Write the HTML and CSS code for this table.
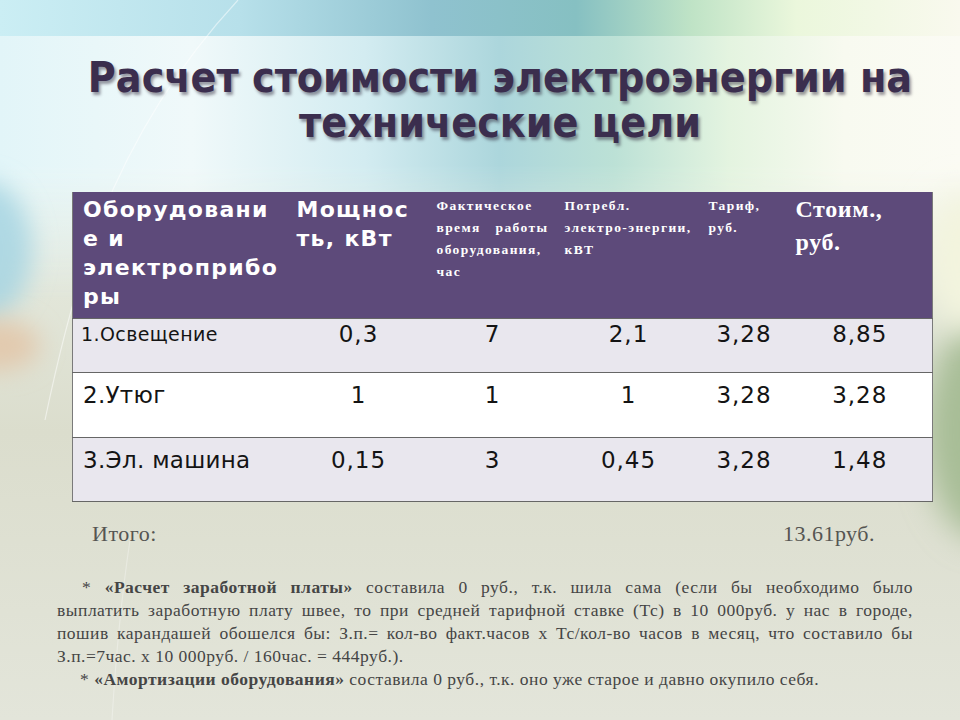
FILE: index.html
```html
<!DOCTYPE html>
<html lang="ru">
<head>
<meta charset="utf-8">
<title>Расчет стоимости электроэнергии</title>
<link rel="stylesheet" href="styles.css">
</head>
<body>
<div class="slide">
  <svg class="backdrop" width="960" height="720" viewBox="0 0 960 720" aria-hidden="true">
    <defs>
      <linearGradient id="base" x1="0" y1="0" x2="0" y2="1">
        <stop offset="0" stop-color="#eef7f5"/>
        <stop offset="0.3" stop-color="#e6ebe0"/>
        <stop offset="0.6" stop-color="#dbddcd"/>
        <stop offset="1" stop-color="#e3e5da"/>
      </linearGradient>
      <linearGradient id="upper" x1="0" y1="0" x2="1" y2="0">
        <stop offset="0" stop-color="#e2f5f8"/>
        <stop offset="0.2" stop-color="#f0f9fa"/>
        <stop offset="0.38" stop-color="#d3ecf1"/>
        <stop offset="0.52" stop-color="#acd6dc"/>
        <stop offset="0.64" stop-color="#bce1d6"/>
        <stop offset="0.76" stop-color="#e4f4e0"/>
        <stop offset="0.88" stop-color="#f8faf0"/>
        <stop offset="1" stop-color="#fbfbf4"/>
      </linearGradient>
      <linearGradient id="band" x1="0" y1="0" x2="1" y2="0">
        <stop offset="0" stop-color="#cbeef4"/>
        <stop offset="0.25" stop-color="#b7e0ea"/>
        <stop offset="0.45" stop-color="#8fc2cf"/>
        <stop offset="0.6" stop-color="#86c0c2"/>
        <stop offset="0.72" stop-color="#bfe3c6"/>
        <stop offset="0.83" stop-color="#ebf7dc"/>
        <stop offset="1" stop-color="#f9f9ee"/>
      </linearGradient>
      <linearGradient id="fade" x1="0" y1="0" x2="0" y2="1">
        <stop offset="0" stop-color="#fff"/>
        <stop offset="0.55" stop-color="#fff"/>
        <stop offset="1" stop-color="#000"/>
      </linearGradient>
      <mask id="upperMask">
        <rect x="0" y="0" width="960" height="300" fill="url(#fade)"/>
      </mask>
      <filter id="blur" x="-50%" y="-50%" width="200%" height="200%">
        <feGaussianBlur stdDeviation="16"/>
      </filter>
      <filter id="soft" x="-50%" y="-50%" width="200%" height="200%">
        <feGaussianBlur stdDeviation="12"/>
      </filter>
    </defs>
    <rect width="960" height="720" fill="url(#base)"/>
    <rect x="0" y="0" width="960" height="300" fill="url(#upper)" mask="url(#upperMask)"/>
    <rect x="0" y="0" width="960" height="36" fill="url(#band)"/>
    <ellipse cx="-18" cy="250" rx="50" ry="70" fill="#a3d3e2" fill-opacity="0.8" filter="url(#soft)"/>
    <ellipse cx="-5" cy="345" rx="45" ry="26" fill="#e3c6a8" fill-opacity="0.85" filter="url(#soft)"/>
    <ellipse cx="985" cy="430" rx="60" ry="110" fill="#a7bd96" filter="url(#blur)"/>
    <ellipse cx="965" cy="260" rx="40" ry="70" fill="#f3f4de" filter="url(#blur)"/>
    <path d="M238 0 Q 150 95 100 220 Q 70 300 45 420" fill="none" stroke="#ffffff" stroke-opacity="0.5" stroke-width="1.2"/>
    <path d="M130 540 Q 118 620 112 720" fill="none" stroke="#ffffff" stroke-opacity="0.3" stroke-width="1.2"/>
  </svg>

  <div class="content">
    <h1 class="title">Расчет стоимости электроэнергии на<br>технические цели</h1>

    <table class="costs">
      <colgroup>
        <col class="w1"><col class="w2"><col class="w3"><col class="w4"><col class="w5"><col class="w6">
      </colgroup>
      <thead>
        <tr>
          <th class="h-big first">Оборудовани<br>е и<br>электроприбо<br>ры</th>
          <th class="h-big">Мощнос<br>ть, кВт</th>
          <th class="h-small"><span class="ln">Фактическое</span><span class="ln just">время работы</span><span class="ln">оборудования,</span><span class="ln">час</span></th>
          <th class="h-small"><span class="ln">Потребл.</span><span class="ln">электро-энергии,</span><span class="ln">кВТ</span></th>
          <th class="h-small"><span class="ln">Тариф,</span><span class="ln">руб.</span></th>
          <th class="h-serif">Стоим.,<br>руб.</th>
        </tr>
      </thead>
      <tbody>
        <tr class="r1 shade">
          <td class="label small">1.Освещение</td>
          <td>0,3</td><td>7</td><td>2,1</td><td>3,28</td><td>8,85</td>
        </tr>
        <tr class="r2">
          <td class="label">2.Утюг</td>
          <td>1</td><td>1</td><td>1</td><td>3,28</td><td>3,28</td>
        </tr>
        <tr class="r3 shade">
          <td class="label">3.Эл. машина</td>
          <td>0,15</td><td>3</td><td>0,45</td><td>3,28</td><td>1,48</td>
        </tr>
      </tbody>
    </table>

    <div class="total">
      <span>Итого:</span>
      <span>13.61руб.</span>
    </div>

    <div class="notes">
      <span class="nl first-line">* <b>«Расчет заработной платы»</b> составила 0 руб., т.к. шила сама (если бы необходимо было</span>
      <span class="nl">выплатить заработную плату швее, то при средней тарифной ставке (Тс) в 10 000руб. у нас в городе,</span>
      <span class="nl">пошив карандашей обошелся бы: З.п.= кол-во факт.часов х Тс/кол-во часов в месяц, что составило бы</span>
      <span class="nl last">З.п.=7час. х 10 000руб. / 160час. = 444руб.).</span>
      <span class="nl tight">* <b>«Амортизации оборудования»</b> составила 0 руб., т.к. оно уже старое и давно окупило себя.</span>
    </div>
  </div>
</div>
</body>
</html>
```

FILE: styles.css
```css
html, body {
  margin: 0;
  padding: 0;
}

body {
  background: #e3e5da;
}

.slide {
  position: relative;
  width: 960px;
  height: 720px;
  overflow: hidden;
}

.backdrop {
  position: absolute;
  left: 0;
  top: 0;
  z-index: 0;
}

.content {
  position: relative;
  z-index: 1;
  padding-top: 55px;
}

.title {
  margin: 0 0 47px 0;
  font-family: "DejaVu Sans Condensed", "DejaVu Sans", sans-serif;
  font-stretch: condensed;
  font-weight: bold;
  font-size: 42.5px;
  line-height: 45px;
  text-align: center;
  color: #3b2e4e;
  padding-left: 40px;
  text-shadow: 2px 3px 3px rgba(40, 30, 50, 0.45);
}

.costs {
  margin-left: 72px;
  width: 860px;
  table-layout: fixed;
  border-collapse: collapse;
  border-left: 1px solid #7a7a7a;
  border-right: 1px solid #7a7a7a;
  border-bottom: 1px solid #666;
}

.w1 { width: 216px; }
.w2 { width: 140px; }
.w3 { width: 128px; }
.w4 { width: 144px; }
.w5 { width: 87px; }
.w6 { width: 145px; }

.costs thead tr {
  background: #5d4a7a;
  height: 126px;
}

.costs th {
  vertical-align: top;
  text-align: left;
  color: #ffffff;
  padding: 0 2px 0 8px;
}

.h-big {
  font-family: "DejaVu Sans", sans-serif;
  font-weight: bold;
  font-size: 22px;
  line-height: 29px;
  letter-spacing: 1.3px;
  padding-top: 3px !important;
  white-space: nowrap;
}

.h-big.first {
  padding-left: 10px !important;
}

.h-small {
  font-family: "Liberation Serif", serif;
  font-weight: bold;
  font-size: 13.5px;
  line-height: 22px;
  letter-spacing: 1.4px;
  padding-top: 3px !important;
}

.h-small .ln {
  display: block;
  white-space: nowrap;
}

.h-small .ln.just {
  width: 112px;
  text-align: justify;
  text-align-last: justify;
}

.h-serif {
  font-family: "Liberation Serif", serif;
  font-weight: bold;
  font-size: 24px;
  line-height: 33px;
  letter-spacing: 0.6px;
  padding-top: 1px !important;
}

.costs td {
  font-family: "DejaVu Sans", sans-serif;
  font-size: 23px;
  line-height: 28px;
  letter-spacing: 1px;
  color: #141414;
  text-align: center;
  vertical-align: top;
  padding: 8px 4px 0 4px;
  border-top: 1px solid #666;
}

.costs tr.shade {
  background: #e9e7ee;
}

.costs tr.r2 {
  background: #ffffff;
}

.costs tr.r1 { height: 54px; }
.costs tr.r2 { height: 65px; }
.costs tr.r3 { height: 64px; }

.costs tr.r1 td {
  padding-top: 1px;
}

.costs td.label {
  text-align: left;
  padding-left: 10px;
  letter-spacing: 0.3px;
}

.costs td.label.small {
  font-size: 19px;
  padding-left: 8px;
  letter-spacing: 0.4px;
}

.total {
  display: flex;
  justify-content: space-between;
  margin: 19px 0 0 92px;
  width: 783px;
  font-family: "Liberation Serif", serif;
  font-size: 22px;
  line-height: 26px;
  letter-spacing: 0.5px;
  color: #555552;
}

.notes {
  margin: 29px 0 0 57px;
  width: 856px;
  font-family: "Liberation Serif", serif;
  font-size: 17.5px;
  line-height: 23.2px;
  letter-spacing: 0.5px;
  color: #454545;
}

.notes .nl {
  display: block;
  text-align: justify;
  text-align-last: justify;
  white-space: nowrap;
}

.notes .nl.first-line {
  padding-left: 25px;
}

.notes .nl.last {
  text-align: left;
  text-align-last: left;
}

.notes .nl.tight {
  padding-left: 23px;
  text-align: left;
  text-align-last: left;
}

.notes b {
  font-weight: bold;
}
```
